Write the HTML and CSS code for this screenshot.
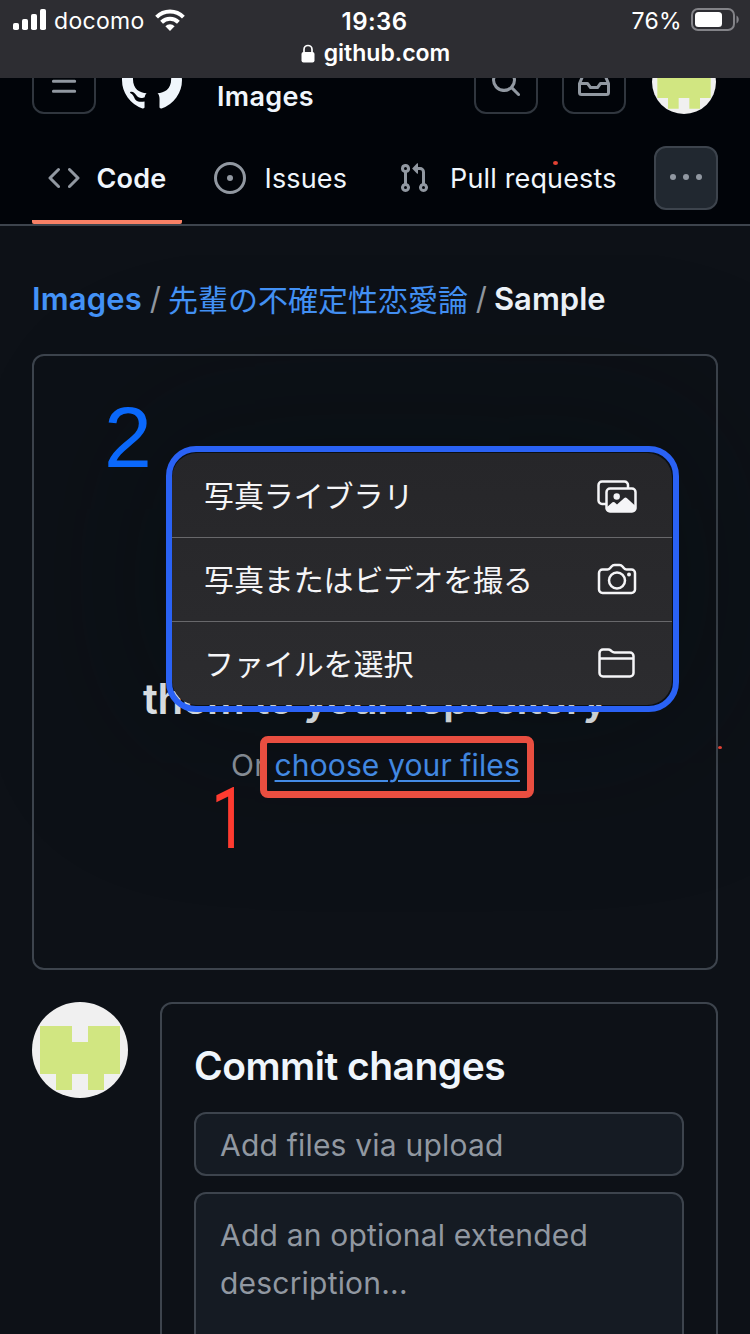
FILE: index.html
```html
<!DOCTYPE html>
<html lang="ja">
<head>
<meta charset="utf-8">
<title>github.com</title>
<link rel="stylesheet" href="styles.css">
</head>
<body>
<div class="screen">
  <div class="browser-bar">
    <div class="status">
      <div class="status-left">
        <svg class="signal" width="34" height="22" viewBox="0 0 34 22" fill="#fff"><rect x="0" y="14" width="6" height="7" rx="1.8"/><rect x="9" y="10" width="6" height="11" rx="1.8"/><rect x="18" y="5" width="6" height="16" rx="1.8"/><rect x="27" y="0" width="6" height="21" rx="1.8"/></svg>
        <span class="carrier">docomo</span>
        <svg class="wifi" width="30" height="22" viewBox="0 0 30 22" fill="none" stroke="#fff" stroke-width="4"><path d="M1.6 8.1a19 19 0 0 1 26.8 0"/><path d="M6.6 13.2a12 12 0 0 1 16.8 0"/><path d="M10.4 17.2a6.6 6.6 0 0 1 9.2 0L15 21.9z" fill="#fff" stroke="none"/></svg>
      </div>
      <span class="clock">19:36</span>
      <div class="status-right">
        <span class="percent">76%</span>
        <svg class="battery" width="50" height="24" viewBox="0 0 50 24"><rect x="1" y="1" width="42" height="21" rx="6" fill="none" stroke="#838388" stroke-width="2"/><rect x="4" y="4" width="27" height="15" rx="3.5" fill="#fff"/><path d="M45.5 7.5c3 1.6 3 6.400 0 8z" fill="#838388"/></svg>
      </div>
    </div>
    <div class="address">
      <svg width="14" height="19" viewBox="0 0 14 19"><rect x="0.500" y="8" width="13" height="10.500" rx="2" fill="#fff"/><path d="M3 9V5.500a4 4 0 0 1 8 0V9" fill="none" stroke="#fff" stroke-width="1.700"/></svg>
      <span class="host">github.com</span>
    </div>
  </div>

  <header class="site-header">
    <div class="top-row">
      <div class="icon-button"><svg width="32" height="32" viewBox="0 0 16 16" fill="none" stroke="#9198a1" stroke-width="1.500" stroke-linecap="round"><path d="M1.750 2.750h12.500M1.750 7.750h12.500M1.750 12.750h12.500" transform="translate(1.100 -.1) scale(.865 1)"/></svg></div>
      <svg class="mark" width="60" height="60" viewBox="0 0 16 16" fill="#f0f6fc"><path d="M8 0c4.420 0 8 3.580 8 8a8.013 8.013 0 0 1-5.450 7.590c-.4.080-.55-.17-.55-.38 0-.27.010-1.130.010-2.200 0-.75-.25-1.230-.54-1.480 1.780-.2 3.650-.88 3.650-3.950 0-.88-.31-1.590-.82-2.150.08-.2.36-1.020-.08-2.120 0 0-.67-.22-2.200.82-.64-.18-1.320-.27-2-.27-.68 0-1.360.09-2 .27-1.530-1.030-2.200-.82-2.200-.82-.44 1.100-.16 1.920-.08 2.120-.51.56-.82 1.280-.82 2.150 0 3.060 1.860 3.750 3.640 3.950-.23.200-.44.550-.51 1.070-.46.210-1.610.550-2.330-.66-.15-.24-.6-.83-1.230-.82-.67.010-.27.380.01.530.34.190.73.900.82 1.130.16.450.68 1.310 2.690.94 0 .67.010 1.300.010 1.490 0 .21-.15.450-.55.380A7.995 7.995 0 0 1 0 8c0-4.420 3.580-8 8-8Z"/></svg>
      <span class="repo-name">Images</span>
      <div class="icon-button search"><svg width="32" height="32" viewBox="0 0 16 16" fill="#9198a1"><path d="M10.680 11.740a6 6 0 0 1-7.922-8.982 6 6 0 0 1 8.982 7.922l3.040 3.040a.749.749 0 0 1-.326 1.275.749.749 0 0 1-.734-.215ZM11.500 7a4.499 4.499 0 1 0-8.997 0A4.499 4.499 0 0 0 11.500 7Z"/></svg></div>
      <div class="icon-button inbox"><svg width="32" height="32" viewBox="0 0 16 16" fill="#9198a1"><path d="M2.800 2.060A1.750 1.750 0 0 1 4.410 1h7.180c.7 0 1.333.417 1.610 1.060l2.740 6.395c.04.093.06.194.06.295v4.500A1.750 1.750 0 0 1 14.250 15H1.750A1.750 1.750 0 0 1 0 13.250v-4.500c0-.101.020-.202.060-.295Zm1.610.44a.25.25 0 0 0-.23.152L1.887 8H4.750a.75.75 0 0 1 .6.300L6.625 10h2.750l1.275-1.700a.75.75 0 0 1 .6-.3h2.863L11.820 2.652a.25.25 0 0 0-.23-.152Zm10.090 7h-2.875l-1.275 1.700a.75.75 0 0 1-.6.300h-3.500a.75.75 0 0 1-.6-.3L4.375 9.500H1.500v3.750c0 .138.112.250.250.250h12.500a.25.25 0 0 0 .250-.250Z"/></svg></div>
      <svg class="avatar-small" viewBox="0 0 96 96"><circle cx="48" cy="48" r="48" fill="#f0f0f0"/><path d="M8 24h32v16h16V24h32v48H72v16H56V72H40v16H24V72H8z" fill="#d1e681"/></svg>
    </div>
    <nav class="tabs">
      <a class="tab code"><svg width="32" height="32" viewBox="0 0 16 16" fill="#9198a1"><path d="m11.280 3.220 4.250 4.250a.75.75 0 0 1 0 1.060l-4.250 4.250a.749.749 0 0 1-1.275-.326.749.749 0 0 1 .215-.734L13.940 8l-3.720-3.720a.749.749 0 0 1 .326-1.275.749.749 0 0 1 .734.215Zm-6.560 0a.751.751 0 0 1 1.042.018.751.751 0 0 1 .018 1.042L2.060 8l3.720 3.720a.749.749 0 0 1-.326 1.275.749.749 0 0 1-.734-.215L.47 8.530a.75.75 0 0 1 0-1.060Z"/></svg><span>Code</span></a>
      <a class="tab issues"><svg width="32" height="32" viewBox="0 0 16 16" fill="#9198a1"><path d="M8 9.500a1.500 1.500 0 1 0 0-3 1.500 1.500 0 0 0 0 3Z"/><path d="M8 0a8 8 0 1 1 0 16A8 8 0 0 1 8 0ZM1.500 8a6.500 6.500 0 1 0 13 0 6.500 6.500 0 0 0-13 0Z"/></svg><span>Issues</span></a>
      <a class="tab pulls"><svg width="32" height="32" viewBox="0 0 16 16" fill="#9198a1"><path d="M1.500 3.250a2.250 2.250 0 1 1 3 2.122v5.256a2.251 2.251 0 1 1-1.500 0V5.372A2.250 2.250 0 0 1 1.500 3.250Zm5.677-.177L9.573.677A.25.25 0 0 1 10 .854V2.500h1A2.500 2.500 0 0 1 13.500 5v5.628a2.251 2.251 0 1 1-1.500 0V5a1 1 0 0 0-1-1h-1v1.646a.25.25 0 0 1-.427.177L7.177 3.427a.25.25 0 0 1 0-.354ZM3.750 2.500a.75.75 0 1 0 0 1.500.75.75 0 0 0 0-1.500Zm0 9.500a.75.75 0 1 0 0 1.500.75.75 0 0 0 0-1.500Zm8.250.750a.75.75 0 1 0 1.500 0 .75.75 0 0 0-1.500 0Z"/></svg><span>Pull requests</span></a>
      <div class="more"><svg width="36" height="8" viewBox="0 0 36 8" fill="#9198a1"><circle cx="5" cy="4" r="3"/><circle cx="18" cy="4" r="3"/><circle cx="31" cy="4" r="3"/></svg></div>
    </nav>
  </header>

  <main class="content">
    <div class="crumbs"><a class="crumb-root">Images</a><span class="sep">/</span><a class="crumb-folder">先輩の不確定性恋愛論</a><span class="sep">/</span><strong class="crumb-current">Sample</strong></div>

    <section class="dropzone">
      <h2 class="drop-title"><span class="line-one">Drag files here to add</span><span class="line-two">them to your repository</span></h2>
      <p class="drop-alt"><span class="or">Or</span><a class="choose">choose your files</a></p>
    </section>

    <section class="commit">
      <svg class="avatar" width="96" height="96" viewBox="0 0 96 96"><circle cx="48" cy="48" r="48" fill="#f0f0f0"/><path d="M8 24h32v16h16V24h32v48H72v16H56V72H40v16H24V72H8z" fill="#d1e681"/></svg>
      <div class="commit-card">
        <h3 class="commit-title"><span>Commit changes</span></h3>
        <div class="field summary"><span>Add files via upload</span></div>
        <div class="field description"><span class="desc-one">Add an optional extended</span><span class="desc-two">description...</span></div>
      </div>
    </section>
  </main>

  <div class="picker">
    <div class="option"><span>写真ライブラリ</span>
      <svg width="40" height="36" viewBox="0 0 40 36" fill="none" stroke="#f5f5f7" stroke-width="2.500"><path d="M9 25H5a3.500 3.500 0 0 1-3.500-3.500V6A3.500 3.500 0 0 1 5 2.500h22.500A3.500 3.500 0 0 1 31 6v3"/><rect x="9.500" y="9.500" width="29" height="23" rx="3.500"/><circle cx="19.700" cy="17.500" r="3.200" fill="#f5f5f7" stroke="none"/><path d="M9.500 28.500l6-5.200q1-.8 2 0l2.500 2.100 7-6.200q1.500-1.200 3 0l8.500 7.800v3a3 3 0 0 1-3 3h-23a3 3 0 0 1-3-3z" fill="#f5f5f7" stroke="none"/></svg></div>
    <div class="option"><span>写真またはビデオを撮る</span>
      <svg width="40" height="36" viewBox="0 0 40 36" fill="none" stroke="#f5f5f7" stroke-width="2.500"><path d="M5.500 7.500h5q1.500 0 2.500-1.200L14.500 4.500q1.200-1.500 3-1.500h5q1.800 0 3 1.500l1.500 1.800q1 1.200 2.500 1.200h5a3.500 3.500 0 0 1 3.500 3.500v16.500a3.500 3.500 0 0 1-3.500 3.500h-29a3.500 3.500 0 0 1-3.500-3.500V11a3.500 3.500 0 0 1 3.500-3.500z"/><circle cx="20" cy="18.500" r="8"/><circle cx="32" cy="12.500" r="2" fill="#f5f5f7" stroke="none"/></svg></div>
    <div class="option"><span>ファイルを選択</span>
      <svg width="40" height="36" viewBox="0 0 40 36" fill="none" stroke="#f5f5f7" stroke-width="2.500"><path d="M2.500 12.500V7A3.500 3.500 0 0 1 6 3.500h5.200q1.500 0 2.600 1l1 .9q1.200 1.100 2.800 1.100H33A3.500 3.500 0 0 1 36.500 10v17a3.500 3.500 0 0 1-3.500 3.500H6A3.500 3.500 0 0 1 2.500 27zM2.500 12.500h34"/></svg></div>
  </div>

  <div class="picker-outline"></div>
  <div class="link-outline"></div>
  <span class="step step-two">2</span>
  <span class="step step-one">1</span>
  <i class="speck speck-top"></i>
  <i class="speck speck-side"></i>
</div>
</body>
</html>
```
FILE: styles.css
```css
* { box-sizing: border-box; }
body { margin: 0; background: #0d1117; }
.screen {
  position: relative;
  width: 750px;
  height: 1334px;
  overflow: hidden;
  background: #0d1117;
  color: #f0f6fc;
  font-family: Inter, "Noto Sans CJK JP", sans-serif;
}
svg { display: block; flex: none; }
h2, h3, p { margin: 0; }
span, a, strong { white-space: nowrap; }

/* Browser chrome */
.browser-bar {
  position: absolute;
  inset: 0 0 auto 0;
  z-index: 2;
  height: 78px;
  background: #2d2d32;
  color: #fff;
}
.status {
  display: grid;
  grid-template-columns: 1fr auto 1fr;
  align-items: center;
  height: 40px;
  padding: 2px 9px 0 13px;
}
.status-left { display: flex; align-items: center; }
.signal { margin-top: -2px; }
.carrier { margin-left: 7px; font-size: 23px; letter-spacing: 0.3px; }
.wifi { margin-left: 10px; margin-top: -2px; }
.clock { margin-right: 5px; font-size: 24px; font-weight: 600; letter-spacing: 0.4px; }
.status-right { display: flex; align-items: center; justify-content: flex-end; gap: 9px; }
.percent { font-size: 23px; letter-spacing: 0.3px; }
.battery { margin-top: -2px; }
.address {
  display: flex;
  align-items: center;
  justify-content: center;
  gap: 9px;
  height: 26px;
  padding-left: 1px;
}
.host { font-size: 23px; font-weight: 600; }

/* Repository header */
.site-header {
  height: 226px;
  padding: 50px 32px 0;
  background: #010409;
  border-bottom: 2px solid #3d444d;
}
.top-row { display: flex; height: 64px; }
.icon-button {
  display: flex;
  align-items: center;
  justify-content: center;
  width: 64px;
  height: 64px;
  border: 2px solid #30363e;
  border-radius: 12px;
}
.mark { margin-left: 26px; }
.repo-name {
  margin-left: 35px;
  width: 257px;
  padding-top: 30px;
  font-size: 27px;
  line-height: 33px;
  font-weight: 600;
  letter-spacing: 0.3px;
}
.inbox { margin-left: 24px; }
.avatar-small { width: 64px; height: 64px; margin-left: 26px; }
.tabs { display: flex; height: 110px; padding-top: 32px; }
.tab { display: flex; height: 78px; padding-bottom: 14px; align-items: center; font-size: 27px; letter-spacing: 0.15px; }
.code {
  width: 150px;
  padding-left: 16px;
  gap: 16.5px;
  font-weight: 600;
  background: linear-gradient(#f78166, #f78166) 0 100% / 100% 4px no-repeat;
  border-radius: 0 0 2px 2px;
}
.issues { margin-left: 32px; gap: 18.5px; width: 184px; }
.pulls { gap: 20px; width: 256px; }
.more {
  display: flex;
  align-items: center;
  justify-content: center;
  width: 64px;
  height: 64px;
  padding-bottom: 2px;
  background: #212830;
  border: 2px solid #3d444d;
  border-radius: 12px;
}

/* Upload page */
.content { padding: 0 32px; }
.crumbs {
  display: flex;
  align-items: center;
  height: 48px;
  margin-top: 48px;
  font-size: 31px;
  color: #4493f8;
}
.crumb-root, .crumb-current { font-weight: 600; }
.crumb-root { letter-spacing: 0.15px; }
.crumb-current { margin-left: -1px; color: #f0f6fc; }
.crumb-folder { margin-left: -1px; font-size: 30px; }
.sep { width: 27px; text-align: center; color: #9198a1; }
.dropzone {
  height: 616px;
  margin-top: 32px;
  padding-top: 244px;
  border: 2px solid #3d444d;
  border-radius: 12px;
  text-align: center;
}
.drop-title { display: flex; flex-direction: column; align-items: center; font-size: 42px; line-height: 66px; font-weight: 600; letter-spacing: -0.5px; color: #f6fbff; }
.drop-alt { display: flex; justify-content: center; gap: 9px; margin-top: 9px; padding-left: 1px; font-size: 30px; line-height: 48px; letter-spacing: 0.12px; color: #9198a1; }
.choose { color: #4a98fb; text-decoration: underline; text-underline-offset: 4px; text-decoration-thickness: 2px; }
.commit { display: flex; gap: 32px; margin-top: 32px; }
.commit-card {
  flex: 1;
  height: 400px;
  padding: 32px;
  border: 2px solid #3d444d;
  border-radius: 12px;
}
.commit-title { height: 60px; font-size: 39px; line-height: 60px; font-weight: 600; letter-spacing: -0.5px; }
.field {
  display: flex;
  flex-direction: column;
  align-items: flex-start;
  padding: 0 24px;
  background: #151b23;
  border: 2px solid #3d444d;
  border-radius: 12px;
  color: #9198a1;
  font-size: 30px;
  letter-spacing: 0.2px;
}
.summary { height: 64px; margin-top: 16px; padding-top: 1px; line-height: 60px; }
.description { height: 240px; margin-top: 16px; padding-top: 17px; line-height: 48px; }

/* File source menu */
.picker {
  position: absolute;
  left: 172px;
  top: 453px;
  width: 500px;
  height: 252px;
  overflow: visible;
  border-radius: 25px;
  background: linear-gradient(#262629, #2c2c2f);
  box-shadow: 0 0 160px 40px rgba(0, 14, 12, 0.3);
}
.option {
  display: flex;
  align-items: center;
  justify-content: space-between;
  height: 84px;
  padding: 0 35px 0 32px;
  font-size: 30px;
  color: #f5f5f7;
}
.option span { padding-bottom: 3px; letter-spacing: -0.1px; }
.option svg { margin-top: 1px; }
.option:first-child svg { margin-top: 3px; }
.option + .option { border-top: 1px solid #68686b; }

/* Hand-placed annotations */
.picker-outline { position: absolute; left: 166px; top: 446px; width: 513px; height: 266px; border: 6px solid #2a62f5; border-radius: 30px; }
.link-outline { position: absolute; left: 260px; top: 736px; width: 274px; height: 62px; border: 7px solid #e94e40; border-radius: 8px; }
.step { position: absolute; font-size: 86px; line-height: 86px; }
.step-two { left: 104px; top: 394px; color: #0a68fb; font-family: "Liberation Sans", sans-serif; }
.step-one { left: 205px; top: 776px; color: #ff3b30; font-family: Roboto, sans-serif; font-weight: 400; transform: scaleX(0.75); }
.speck { position: absolute; border-radius: 50%; background: #e34234; }
.speck-top { left: 553px; top: 161px; width: 5px; height: 4px; }
.speck-side { left: 718px; top: 746px; width: 4px; height: 3px; }
```
